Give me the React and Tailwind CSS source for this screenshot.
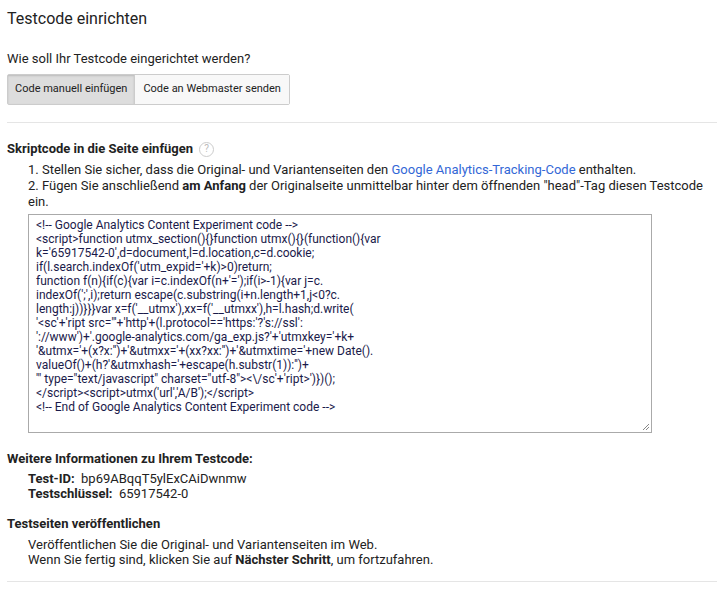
export default function App() {
  const code = [
    "<!-- Google Analytics Content Experiment code -->",
    "<script>function utmx_section(){}function utmx(){}(function(){var",
    "k='65917542-0',d=document,l=d.location,c=d.cookie;",
    "if(l.search.indexOf('utm_expid='+k)>0)return;",
    "function f(n){if(c){var i=c.indexOf(n+'=');if(i>-1){var j=c.",
    "indexOf(';',i);return escape(c.substring(i+n.length+1,j<0?c.",
    "length:j))}}}var x=f('__utmx'),xx=f('__utmxx'),h=l.hash;d.write(",
    "'<sc'+'ript src=\"'+'http'+(l.protocol=='https:'?'s://ssl':",
    "'://www')+'.google-analytics.com/ga_exp.js?'+'utmxkey='+k+",
    "'&utmx='+(x?x:'')+'&utmxx='+(xx?xx:'')+'&utmxtime='+new Date().",
    "valueOf()+(h?'&utmxhash='+escape(h.substr(1)):'')+",
    "'\" type=\"text/javascript\" charset=\"utf-8\"><\\/sc'+'ript>')})();",
    "</script><script>utmx('url','A/B');</script>",
    "<!-- End of Google Analytics Content Experiment code -->",
  ];
  return (
    <div className="w-[724px] h-[595px] bg-white text-[#222] text-[13px] px-[7px]" style={{ fontFamily: "Roboto, 'Liberation Sans', sans-serif" }}>
      <div className="pt-[8px] text-[16px] leading-[22px] text-[#222]">Testcode einrichten</div>
      <div className="mt-[20px] leading-[18px]">Wie soll Ihr Testcode eingerichtet werden?</div>
      <div className="mt-[6px] flex w-fit border border-[#ccc] rounded-[2px] text-[11px] h-[31px]">
        <div className="px-[7px] flex items-center bg-[#ddd] border-r border-[#ccc] shadow-[inset_0_1px_2px_rgba(0,0,0,0.15)]">Code manuell einfügen</div>
        <div className="px-[8px] flex items-center bg-[#f8f8f8]">Code an Webmaster senden</div>
      </div>
      <div className="mt-[17px] border-t border-[#e5e5e5]" />
      <div className="mt-[17px] flex items-center gap-[6px] font-bold leading-[18px]">
        Skriptcode in die Seite einfügen
        <span className="w-[15px] h-[15px] rounded-full border border-[#ccc] text-[10px] text-[#bbb] font-normal flex items-center justify-center">?</span>
      </div>
      <div className="pl-[21px] leading-[16px] mt-[4px]">
        <div>1. Stellen Sie sicher, dass die Original- und Variantenseiten den <span className="text-[#3367d6]">Google Analytics-Tracking-Code</span> enthalten.</div>
        <div>2. Fügen Sie anschließend <span className="font-bold">am Anfang</span> der Originalseite unmittelbar hinter dem öffnenden "head"-Tag diesen Testcode ein.</div>
      </div>
      <div className="ml-[21px] mt-[4px] w-[624px] h-[219px] border border-[#aaa] px-[7px] pt-[3px] text-[12px] leading-[14px] text-[#1a1a4a] whitespace-pre overflow-hidden relative">
        {code.join("\n")}
        <svg className="absolute right-[1px] bottom-[1px]" width="9" height="9" viewBox="0 0 9 9"><path d="M8 2L2 8M8 5L5 8" stroke="#888" strokeWidth="1" /></svg>
      </div>
      <div className="mt-[17px] font-bold leading-[18px]">Weitere Informationen zu Ihrem Testcode:</div>
      <div className="pl-[21px] leading-[15px] mt-[3px]">
        <div><b>Test-ID:</b>&nbsp; bp69ABqqT5ylExCAiDwnmw</div>
        <div><b>Testschlüssel:</b>&nbsp; 65917542-0</div>
      </div>
      <div className="mt-[14px] font-bold leading-[18px]">Testseiten veröffentlichen</div>
      <div className="pl-[21px] leading-[15px] mt-[4px]">
        <div>Veröffentlichen Sie die Original- und Variantenseiten im Web.</div>
        <div>Wenn Sie fertig sind, klicken Sie auf <b>Nächster Schritt</b>, um fortzufahren.</div>
      </div>
      <div className="mt-[14px] border-t border-[#e5e5e5]" />
    </div>
  );
}
